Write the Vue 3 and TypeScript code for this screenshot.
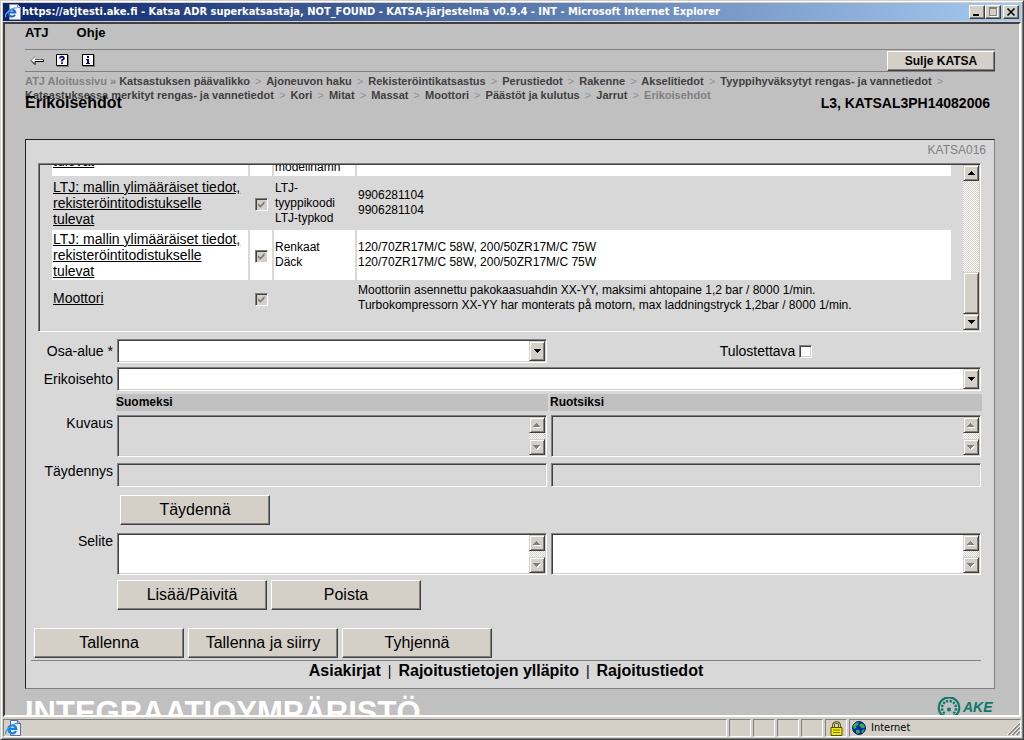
<script setup lang="ts">
import { ref } from 'vue'

interface Row {
  part: string
  kind: string[]
  text: string[]
  shaded: boolean
}

const title =
  'https://atjtesti.ake.fi - Katsa ADR superkatsastaja, NOT_FOUND - KATSA-järjestelmä v0.9.4 - INT - Microsoft Internet Explorer'

const crumbs: string[][] = [
  [
    'Katsastuksen päävalikko',
    'Ajoneuvon haku',
    'Rekisteröintikatsastus',
    'Perustiedot',
    'Rakenne',
    'Akselitiedot',
    'Tyyppihyväksytyt rengas- ja vannetiedot',
  ],
  [
    'Katsastuksessa merkityt rengas- ja vannetiedot',
    'Kori',
    'Mitat',
    'Massat',
    'Moottori',
    'Päästöt ja kulutus',
    'Jarrut',
  ],
]

const longPart = 'LTJ: mallin ylimääräiset tiedot, rekisteröintitodistukselle tulevat'

const rows: Row[] = [
  { part: longPart, kind: ['LTJ-tyyppikoodi', 'LTJ-typkod'], text: ['9906281104', '9906281104'], shaded: false },
  {
    part: longPart,
    kind: ['Renkaat', 'Däck'],
    text: ['120/70ZR17M/C 58W, 200/50ZR17M/C 75W', '120/70ZR17M/C 58W, 200/50ZR17M/C 75W'],
    shaded: true,
  },
  {
    part: 'Moottori',
    kind: [],
    text: [
      'Moottoriin asennettu pakokaasuahdin XX-YY, maksimi ahtopaine 1,2 bar / 8000 1/min.',
      'Turbokompressorn XX-YY har monterats på motorn, max laddningstryck 1,2bar / 8000 1/min.',
    ],
    shaded: false,
  },
]

const area = ref('')
const condition = ref('')
const printable = ref(false)
const noteFi = ref('')
const noteSv = ref('')
</script>

<template>
  <div class="window">
    <header class="titlebar">
      <svg class="ie" viewBox="0 0 16 16" aria-hidden="true">
        <path d="M4.500 .5h8l3 3v12h-11z" fill="#f4f6fc" stroke="#8a94b8" />
        <path d="M12.500 .5v3h3" fill="#c8d0e8" stroke="#8a94b8" />
        <path d="M10 10.800A3.500 3.500 0 1 1 10.400 8.600H4" fill="none" stroke="#1c62c8" stroke-width="2" />
        <path d="M1 13Q-1 11 4 7T12 4" fill="none" stroke="#5aa8ec" stroke-width="1.3" />
      </svg>
      <span class="caption">{{ title }}</span>
      <button class="winbtn" type="button" aria-label="Pienennä">
        <svg viewBox="0 0 12 10"><path d="M2 7h6v2H2z" fill="#000" /></svg>
      </button>
      <button class="winbtn" type="button" aria-label="Suurenna" disabled>
        <svg viewBox="0 0 12 10" shape-rendering="crispEdges">
          <path d="M3 1h8v9H3z" fill="#fff" />
          <path d="M2 0h8v9H2z" fill="#808080" />
          <path d="M3 2h6v6H3z" fill="#d4d0c8" />
        </svg>
      </button>
      <button class="winbtn close" type="button" aria-label="Sulje">
        <svg viewBox="0 0 12 10"><path d="M2.5 1.5l7 7M9.5 1.5l-7 7" stroke="#000" stroke-width="1.6" /></svg>
      </button>
    </header>

    <main class="page">
      <nav class="menu">
        <a href="#">ATJ</a>
        <a href="#">Ohje</a>
      </nav>

      <div class="toolbar">
        <button class="tool" type="button" aria-label="Takaisin">
          <svg width="14" height="10" viewBox="0 0 14 10">
            <path d="M5 1v2h8v2H5v3L1 4.5z" fill="#fff" />
            <path d="M5 .5L1 4.5" stroke="#808080" fill="none" />
            <path d="M1 4.5L5 8.500V5.500H13.500V3.5" stroke="#000" fill="none" />
            <path d="M5 3.5h8" stroke="#606060" />
          </svg>
        </button>
        <button class="tool" type="button" aria-label="Ohje">
          <svg width="14" height="14" viewBox="0 0 14 14">
            <path d="M1 1h12v12H1z" fill="#808080" />
            <path d="M.5 .5h11v11H.5z" fill="#fff" stroke="#000" />
            <path d="M4 4.5V3.6Q4.4 2.6 6 2.6T8 4.2Q8 5.2 6 6.2V7.4M6 8.2V10" fill="none" stroke="#00008b" stroke-width="1.7" />
          </svg>
        </button>
        <button class="tool" type="button" aria-label="Tietoja">
          <svg width="14" height="14" viewBox="0 0 14 14" shape-rendering="crispEdges">
            <path d="M1 1h12v12H1z" fill="#808080" />
            <path d="M.5 .5h11v11H.5z" fill="#fff" stroke="#000" />
            <path d="M5 2h2v2H5zM4 5h3v4h1v1H4V9h1V6H4z" fill="#00008b" />
          </svg>
        </button>
        <button class="raised quit" type="button">Sulje KATSA</button>
      </div>

      <nav class="crumbs">
        <div>
          <a class="dim" href="#">ATJ Aloitussivu »</a>
          <template v-for="c in crumbs[0]" :key="c">{{ ' ' }}<a href="#">{{ c }}</a>{{ ' ' }}<i>&gt;</i></template>
        </div>
        <div>
          <template v-for="c in crumbs[1]" :key="c"><a href="#">{{ c }}</a>{{ ' ' }}<i>&gt;</i>{{ ' ' }}</template>
          <span class="dim">Erikoisehdot</span>
        </div>
      </nav>

      <div class="heading">
        <h1>Erikoisehdot</h1>
        <span>L3, KATSAL3PH14082006</span>
      </div>

      <section class="panel">
        <p class="code">KATSA016</p>

        <div class="list sunken">
          <div class="viewport">
            <table>
              <colgroup>
                <col class="c-part" />
                <col class="c-tick" />
                <col class="c-kind" />
                <col />
              </colgroup>
              <tbody>
                <tr class="shaded cut">
                  <td><a href="#">tulevat</a></td>
                  <td></td>
                  <td class="small">modellnamn</td>
                  <td></td>
                </tr>
                <tr v-for="(r, i) in rows" :key="i" :class="{ shaded: r.shaded }">
                  <td class="part"><a href="#">{{ r.part }}</a></td>
                  <td class="tick"><input type="checkbox" class="box" checked disabled :aria-label="r.part" /></td>
                  <td class="small"><div v-for="k in r.kind" :key="k">{{ k }}</div></td>
                  <td class="small"><div v-for="(t, j) in r.text" :key="j">{{ t }}</div></td>
                </tr>
              </tbody>
            </table>
          </div>
          <div class="scroll" aria-hidden="true">
            <span class="sbtn"><svg viewBox="0 0 7 4" shape-rendering="crispEdges"><path d="M3 0h1v1h1v1h1v1h1v1H0V3h1V2h1V1h1z" /></svg></span>
            <span class="track"><span class="thumb"></span></span>
            <span class="sbtn"><svg viewBox="0 0 7 4" shape-rendering="crispEdges"><path d="M0 0h7v1H6v1H5v1H4v1H3V3H2V2H1V1H0z" /></svg></span>
          </div>
        </div>

        <form class="form" @submit.prevent>
          <label class="lab mid" for="area">Osa-alue *</label>
          <div class="sunken combo">
            <select id="area" v-model="area"><option value=""></option></select>
            <span class="sbtn"><svg viewBox="0 0 7 4" shape-rendering="crispEdges"><path d="M0 0h7v1H6v1H5v1H4v1H3V3H2V2H1V1H0z" /></svg></span>
          </div>
          <div class="print">
            <label for="print">Tulostettava</label>
            <input id="print" v-model="printable" class="box" type="checkbox" />
          </div>

          <label class="lab mid" for="cond">Erikoisehto</label>
          <div class="sunken combo wide">
            <select id="cond" v-model="condition"><option value=""></option></select>
            <span class="sbtn"><svg viewBox="0 0 7 4" shape-rendering="crispEdges"><path d="M0 0h7v1H6v1H5v1H4v1H3V3H2V2H1V1H0z" /></svg></span>
          </div>

          <div class="langs">
            <span>Suomeksi</span>
            <span>Ruotsiksi</span>
          </div>

          <label class="lab" for="desc-fi">Kuvaus</label>
          <div v-for="l in ['fi', 'sv']" :key="'d' + l" class="sunken memo off">
            <textarea :id="'desc-' + l" readonly aria-label="Kuvaus"></textarea>
            <div class="scroll idle" aria-hidden="true">
              <span class="sbtn"><svg viewBox="0 0 8 5" shape-rendering="crispEdges"><path class="lit" d="M1 4h7v1H1z" /><path d="M3 0h1v1h1v1h1v1h1v1H0V3h1V2h1V1h1z" /></svg></span>
              <span class="track"></span>
              <span class="sbtn"><svg viewBox="0 0 8 5" shape-rendering="crispEdges"><path class="lit" d="M8 1v1H7v1H6v1H5v1H4V1z" /><path d="M0 0h7v1H6v1H5v1H4v1H3V3H2V2H1V1H0z" /></svg></span>
            </div>
          </div>

          <label class="lab gap" for="supp-fi">Täydennys</label>
          <input v-for="l in ['fi', 'sv']" :id="'supp-' + l" :key="'s' + l" class="sunken line off gap" type="text" readonly aria-label="Täydennys" />

          <div class="actions fill"><button class="raised" type="button">Täydennä</button></div>

          <label class="lab" for="note-fi">Selite</label>
          <div class="sunken memo">
            <textarea id="note-fi" v-model="noteFi"></textarea>
            <div class="scroll idle" aria-hidden="true">
              <span class="sbtn"><svg viewBox="0 0 8 5" shape-rendering="crispEdges"><path class="lit" d="M1 4h7v1H1z" /><path d="M3 0h1v1h1v1h1v1h1v1H0V3h1V2h1V1h1z" /></svg></span>
              <span class="track"></span>
              <span class="sbtn"><svg viewBox="0 0 8 5" shape-rendering="crispEdges"><path class="lit" d="M8 1v1H7v1H6v1H5v1H4V1z" /><path d="M0 0h7v1H6v1H5v1H4v1H3V3H2V2H1V1H0z" /></svg></span>
            </div>
          </div>
          <div class="sunken memo">
            <textarea v-model="noteSv" aria-label="Selite ruotsiksi"></textarea>
            <div class="scroll idle" aria-hidden="true">
              <span class="sbtn"><svg viewBox="0 0 8 5" shape-rendering="crispEdges"><path class="lit" d="M1 4h7v1H1z" /><path d="M3 0h1v1h1v1h1v1h1v1H0V3h1V2h1V1h1z" /></svg></span>
              <span class="track"></span>
              <span class="sbtn"><svg viewBox="0 0 8 5" shape-rendering="crispEdges"><path class="lit" d="M8 1v1H7v1H6v1H5v1H4V1z" /><path d="M0 0h7v1H6v1H5v1H4v1H3V3H2V2H1V1H0z" /></svg></span>
            </div>
          </div>

          <div class="actions update">
            <button class="raised" type="button">Lisää/Päivitä</button>
            <button class="raised" type="button">Poista</button>
          </div>
        </form>

        <div class="bottom">
          <div class="actions">
            <button class="raised" type="button">Tallenna</button>
            <button class="raised" type="button">Tallenna ja siirry</button>
            <button class="raised" type="button">Tyhjennä</button>
          </div>
          <nav class="links">
            <a href="#">Asiakirjat</a><span>|</span><a href="#">Rajoitustietojen ylläpito</a><span>|</span><a href="#">Rajoitustiedot</a>
          </nav>
        </div>
      </section>

      <footer class="brand">
        <strong>INTEGRAATIOYMPÄRISTÖ</strong>
        <svg class="ake" viewBox="0 0 58 20" role="img" aria-label="AKE">
          <g fill="none" stroke="#107868">
            <path d="M5.3 18.5A10.3 10.3 0 1 1 18.7 18.5" stroke-width="2.2" />
            <path d="M7.6 16.4A7 7 0 1 1 16.4 16.4" stroke-width="2.4" stroke-dasharray="2.2 1.3" />
            <path d="M3 18.5h5M16 18.5h5" stroke-width="2" />
          </g>
          <circle cx="12" cy="12.5" r="2" fill="#107868" />
          <text x="26" y="15">AKE</text>
        </svg>
      </footer>
    </main>

    <footer class="status">
      <div class="cell grow">
        <svg class="ie" viewBox="0 0 16 16" aria-hidden="true">
          <path d="M5.500 .5h7l3 3v12h-10z" fill="#eef2ff" stroke="#5a68b0" />
          <path d="M12.500 .5v3h3" fill="#b8c4f0" stroke="#5a68b0" />
          <path d="M11 11A4 4 0 1 1 11.300 8.800H4.500" fill="none" stroke="#1680d8" stroke-width="2.2" />
          <path d="M1 14Q-1 12 5 7T13 4" fill="none" stroke="#30a0e8" stroke-width="1.3" />
        </svg>
      </div>
      <div v-for="n in 4" :key="n" class="cell tiny"></div>
      <div class="cell tiny">
        <svg width="13" height="15" viewBox="0 0 13 15" aria-hidden="true">
          <path d="M3.5 8V4Q3.5 1.5 6.5 1.5T9.5 4V8" fill="none" stroke="#404000" stroke-width="2.6" />
          <path d="M3.5 8V4Q3.5 1.5 6.5 1.5T9.5 4V8" fill="none" stroke="#d8d870" />
          <path d="M1 6.5h11v8H1z" fill="#f0e800" stroke="#505000" />
          <path d="M3 9h7M3 11.5h7" stroke="#807800" />
        </svg>
      </div>
      <div class="cell zone">
        <svg width="14" height="14" viewBox="0 0 14 14" aria-hidden="true">
          <circle cx="7" cy="7" r="6.4" fill="#1020c0" stroke="#081050" />
          <path d="M2 3Q4 1 7 1.5L6 4 4 5 4.5 7 2 8 1 6zM8 3l3-.5 2 3-1 2-3-1-1.5-1.5zM4 9l3-.5L8 11l-2 2-2-1.5zM10 9l2.5-.5L11 12H9.500z" fill="#28b838" />
        </svg>
        <span>Internet</span>
        <svg class="grip" width="13" height="13" viewBox="0 0 13 13" aria-hidden="true">
          <path d="M0 13L13 0M4 13L13 4M8 13L13 8" stroke="#fff" />
          <path d="M1.500 13L13 1.500M5.500 13L13 5.500M9.500 13L13 9.500" stroke="#808080" stroke-width="1.500" />
        </svg>
      </div>
    </footer>
  </div>
</template>

<style>
body {
  margin: 0;
  background: #d4d0c8;
}
</style>

<style scoped>
* {
  box-sizing: border-box;
}
.window {
  height: 100vh;
  display: flex;
  flex-direction: column;
  padding: 2px;
  border: 1px solid;
  border-color: #d4d0c8 #404040 #404040 #d4d0c8;
  box-shadow: inset 1px 1px #fff, inset -1px -1px #808080;
  background: #d4d0c8;
  color: #000;
  font-family: "Liberation Sans", Arial, sans-serif;
  font-size: 14px;
  line-height: 16px;
}
a {
  color: inherit;
  text-decoration: none;
}
button,
input,
select,
textarea {
  margin: 0;
  padding: 0;
  border: 0;
  border-radius: 0;
  outline: 0;
  font: inherit;
  color: inherit;
  background: transparent;
}

.titlebar {
  flex: none;
  display: flex;
  align-items: center;
  height: 18px;
  margin-bottom: 1px;
  padding: 0 2px;
  background: linear-gradient(90deg, #0a246a, #a6caf0);
}
.ie {
  flex: none;
  width: 16px;
  height: 16px;
}
.caption {
  flex: 1;
  min-width: 0;
  margin-left: 1px;
  overflow: hidden;
  white-space: nowrap;
  color: #fff;
  font: bold 11px/16px "DejaVu Sans Condensed", Tahoma, sans-serif;
}
.winbtn {
  width: 16px;
  height: 14px;
  padding: 1px;
  border: 1px solid;
  border-color: #fff #404040 #404040 #fff;
  box-shadow: inset -1px -1px #808080;
  background: #d4d0c8;
}
.winbtn svg {
  display: block;
  width: 12px;
  height: 10px;
}
.winbtn.close {
  margin-left: 2px;
}

.page {
  flex: 1;
  min-height: 0;
  overflow: hidden;
  padding: 0 24px 0 20px;
  border: 2px solid;
  border-color: #404040 #fff #fff #404040;
  background: #c0c0c0;
}
.menu {
  display: flex;
  gap: 28px;
  height: 25px;
  padding-top: 1px;
  font-size: 13px;
  font-weight: bold;
}
.toolbar {
  display: flex;
  align-items: center;
  height: 23px;
  padding-left: 5px;
  border-top: 1px solid #808080;
  border-bottom: 1px solid #808080;
}
.tool {
  display: flex;
  margin-right: 12px;
}
.raised {
  width: 150px;
  height: 30px;
  border: 1px solid;
  border-color: #fff #404040 #404040 #fff;
  box-shadow: inset -1px -1px #808080;
  background: #d4d0c8;
  font-size: 16px;
}
.quit {
  width: 108px;
  height: 20px;
  margin-left: auto;
  font-size: 12px;
  font-weight: bold;
}
.crumbs {
  margin-top: 2px;
  color: #404040;
  font-size: 11px;
  font-weight: bold;
  line-height: 14px;
  white-space: nowrap;
}
.crumbs .dim {
  color: #808080;
}
.crumbs i {
  margin: 0 2px;
  color: #909090;
  font-style: normal;
  font-weight: normal;
}
.heading {
  display: flex;
  justify-content: space-between;
  margin: -7px 5px 28px 0;
  font-size: 14px;
  font-weight: bold;
}
.heading h1 {
  margin: 0;
  font-size: 16px;
}

.panel {
  border: 1px solid;
  border-color: #202020 #808080 #808080 #202020;
  background: #d8d8d8;
}
.code {
  margin: 2px 8px 5px;
  color: #808080;
  font-size: 12px;
  text-align: right;
}
.sunken {
  padding: 1px;
  border: 1px solid;
  border-color: #808080 #fff #fff #808080;
  box-shadow: inset 1px 1px #404040, inset -1px -1px #d4d0c8;
}
.list {
  display: flex;
  height: 169px;
  margin: 0 13px 0 12px;
}
.viewport {
  flex: 1;
  min-width: 0;
  display: flex;
  flex-direction: column;
  justify-content: flex-end;
  overflow: hidden;
  padding: 0 10px 14px 10px;
}
table {
  flex: none;
  width: 100%;
  table-layout: fixed;
  border-collapse: separate;
  border-spacing: 2px;
}
.c-part {
  width: 196px;
}
.c-tick {
  width: 22px;
}
.c-kind {
  width: 81px;
}
td {
  padding: 1px;
  vertical-align: middle;
}
.part {
  padding-right: 4px;
}
td a {
  text-decoration: underline;
}
.shaded td {
  background: #fff;
}
.cut td {
  height: 62px;
  padding-bottom: 7px;
  vertical-align: bottom;
}
.cut td.small {
  padding-bottom: 1px;
}
.small {
  font-size: 12px;
  line-height: 15px;
}
.tick {
  text-align: center;
}
.box {
  appearance: none;
  display: inline-block;
  width: 13px;
  height: 13px;
  border: 1px solid;
  border-color: #808080 #fff #fff #808080;
  box-shadow: inset 1px 1px #404040, inset -1px -1px #d4d0c8;
  background: #fff;
  vertical-align: middle;
}
.box:disabled {
  background: #d4d0c8;
}
.box:checked::before {
  content: "";
  display: block;
  width: 7px;
  height: 7px;
  margin: 2px;
  background: #808080;
  clip-path: polygon(0 29%, 43% 64%, 100% 0, 100% 43%, 43% 100%, 0 64%);
}

.scroll {
  flex: none;
  display: flex;
  flex-direction: column;
  width: 16px;
}
.sbtn,
.thumb {
  flex: none;
  display: flex;
  align-items: center;
  justify-content: center;
  width: 16px;
  height: 16px;
  border: 1px solid;
  border-color: #d4d0c8 #404040 #404040 #d4d0c8;
  box-shadow: inset 1px 1px #fff, inset -1px -1px #808080;
  background: #d4d0c8;
}
.sbtn svg {
  width: 7px;
  height: 4px;
}
.idle .sbtn svg {
  width: 8px;
  height: 5px;
  fill: #808080;
}
.lit {
  fill: #fff;
}
.track {
  flex: 1;
  display: flex;
  flex-direction: column;
  justify-content: flex-end;
  background: repeating-conic-gradient(#fff 0 25%, #d4d0c8 0 50%) 0 0 / 2px 2px;
}
.thumb {
  height: 42px;
}

.form {
  display: grid;
  grid-template-columns: 75px 1fr 1fr;
  column-gap: 4px;
  margin: 7px 13px 0 12px;
}
.lab {
  text-align: right;
  white-space: nowrap;
}
.mid {
  align-self: center;
  margin-bottom: 4px;
}
.combo {
  display: flex;
  height: 24px;
  margin-bottom: 4px;
  background: #fff;
}
.combo select {
  flex: 1;
  min-width: 0;
  appearance: none;
}
.combo .sbtn {
  height: 20px;
  pointer-events: none;
}
.wide,
.actions {
  grid-column: 2 / 4;
}
.print {
  display: flex;
  align-items: center;
  justify-content: center;
  gap: 4px;
  margin-bottom: 4px;
}
.langs {
  grid-column: 2 / 4;
  display: grid;
  grid-template-columns: 1fr 1fr;
  gap: 2px;
  margin: -1px -1px 4px;
  font-size: 12px;
  font-weight: bold;
  line-height: 17px;
}
.langs span {
  background: #c0c0c0;
}
.memo {
  display: flex;
  height: 42px;
  background: #fff;
}
.memo textarea {
  flex: 1;
  min-width: 0;
  resize: none;
  overflow: hidden;
}
.line {
  min-width: 0;
  height: 24px;
}
.memo.off,
.line.off {
  background: #d8d8d8;
}
.gap {
  margin-top: 6px;
}
.actions {
  display: flex;
  gap: 4px;
}
.fill {
  margin: 8px 3px;
}
.update {
  margin-top: 5px;
}
.bottom {
  margin: 18px 13px 0 5px;
}
.bottom .actions {
  padding: 0 3px 2px;
  border-bottom: 1px solid #808080;
}
.links {
  display: flex;
  justify-content: center;
  gap: 7px;
  height: 27px;
  padding-top: 2px;
  font-size: 16px;
  font-weight: bold;
}
.links span {
  font-size: 14px;
  font-weight: normal;
}

.brand {
  display: flex;
  justify-content: space-between;
  align-items: flex-start;
}
.brand strong {
  margin-top: 6px;
  color: #fff;
  font-size: 31px;
  line-height: 36px;
}
.ake {
  width: 58px;
  height: 20px;
  margin-top: 8px;
}
.ake text {
  fill: #107868;
  font: italic bold 14px "Liberation Sans", Arial, sans-serif;
}

.status {
  flex: none;
  display: flex;
  gap: 2px;
  height: 18px;
  margin-top: 2px;
  font: 11px/16px "DejaVu Sans Condensed", Tahoma, sans-serif;
}
.cell {
  display: flex;
  align-items: center;
  border: 1px solid;
  border-color: #808080 #fff #fff #808080;
}
.grow {
  flex: 1;
  padding-left: 1px;
}
.tiny {
  justify-content: center;
  width: 22px;
}
.zone {
  width: 172px;
  padding-left: 2px;
  gap: 5px;
}
.grip {
  margin-left: auto;
}
</style>
